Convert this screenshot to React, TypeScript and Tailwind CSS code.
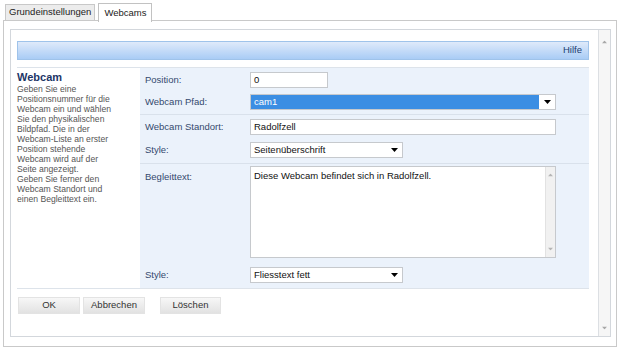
const font = "font-['Liberation_Sans',Arial,sans-serif]";

const helpLines = [
  "Geben Sie eine",
  "Positionsnummer für die",
  "Webcam ein und wählen",
  "Sie den physikalischen",
  "Bildpfad. Die in der",
  "Webcam-Liste an erster",
  "Position stehende",
  "Webcam wird auf der",
  "Seite angezeigt.",
  "Geben Sie ferner den",
  "Webcam Standort und",
  "einen Begleittext ein.",
];

function Arrow({ className = "" }: { className?: string }) {
  return (
    <svg width="7" height="4" viewBox="0 0 7 4" className={className}>
      <path d="M0 0 H7 L3.5 4 Z" fill="currentColor" />
    </svg>
  );
}

function Select({ value, w, active = false }: { value: string; w: string; active?: boolean }) {
  return (
    <div className={`${w} h-[16px] flex border border-[#c6c9cd] bg-white`}>
      <div
        className={`flex-1 flex items-center pl-[3px] text-[9.5px] ${
          active ? "bg-[#3b8ee3] text-white" : "text-[#111]"
        }`}
      >
        {value}
      </div>
      <div className="w-[16px] flex items-center justify-center text-black">
        <Arrow />
      </div>
    </div>
  );
}

function Input({ value, w }: { value: string; w: string }) {
  return (
    <div className={`${w} h-[16px] flex items-center pl-[3px] border border-[#c6c9cd] bg-white text-[9.5px] text-[#111]`}>
      {value}
    </div>
  );
}

function Label({ children }: { children: string }) {
  return <div className="w-[105px] text-[9.5px] text-[#34496e]">{children}</div>;
}

function Button({ children, className }: { children: string; className: string }) {
  return (
    <button
      className={`${className} h-[17px] text-[9.5px] text-[#333] bg-gradient-to-b from-[#f7f7f7] to-[#e2e2e2] border border-[#e3e3e3]`}
    >
      {children}
    </button>
  );
}

export default function App() {
  return (
    <div className={`w-[620px] h-[353px] bg-white overflow-hidden ${font}`}>
      {/* Tabs */}
      <div className="flex items-end h-[21px] pl-[5px] gap-[3px] relative z-10">
        <div className="h-[16px] px-[3px] flex items-center bg-[#ececec] border border-[#c8c8c8] border-b-0 text-[9.5px] text-[#222] mb-px">
          Grundeinstellungen
        </div>
        <div className="h-[19px] px-[5px] flex items-center bg-white border border-[#c2c2c2] border-b-0 text-[9.5px] text-[#222] -mb-px">
          Webcams
        </div>
      </div>

      {/* Tab body */}
      <div className="mx-[3px] -mt-px h-[327px] border border-[#c9c9c9] pl-[6px] pr-[5px] pt-[8px]">
        <div className="h-[308px] flex border border-[#d3d7dc]">
          <div className="flex-1 pl-[6px] pr-[9px] pt-[11px]">
            {/* Header */}
            <div className="h-[19px] flex items-center justify-end pr-[6px] border border-[#9fc3ea] bg-gradient-to-b from-[#dfeafa] to-[#a9ccf5] text-[9.5px] text-[#1d3d70]">
              Hilfe
            </div>

            {/* Main */}
            <div className="mt-[7px] flex border-t border-b border-[#dde3ea]">
              <div className="w-[123px] pt-[2px] pr-[4px]">
                <div className="text-[11px] font-bold text-[#1c3566] leading-[14px]">Webcam</div>
                <div className="text-[8.6px] leading-[10px] text-[#555]">
                  {helpLines.map((l) => (
                    <div key={l}>{l}</div>
                  ))}
                </div>
              </div>

              <div className="flex-1 bg-[#ebf2fb]">
                <div className="pl-[5px] pt-[4px] pb-[4px] flex flex-col gap-[6px] border-b border-[#d9e1eb]">
                  <div className="flex items-center">
                    <Label>Position:</Label>
                    <Input value="0" w="w-[78px]" />
                  </div>
                  <div className="flex items-center">
                    <Label>Webcam Pfad:</Label>
                    <Select value="cam1" w="w-[306px]" active />
                  </div>
                </div>

                <div className="pl-[5px] pt-[4px] pb-[5px] flex flex-col gap-[7px] border-b border-[#d9e1eb]">
                  <div className="flex items-center">
                    <Label>Webcam Standort:</Label>
                    <Input value="Radolfzell" w="w-[306px]" />
                  </div>
                  <div className="flex items-center">
                    <Label>Style:</Label>
                    <Select value="Seitenüberschrift" w="w-[153px]" />
                  </div>
                </div>

                <div className="pl-[5px] pt-[2px] pb-[5px] flex flex-col gap-[9px]">
                  <div className="flex items-start">
                    <div className="pt-[4px]">
                      <Label>Begleittext:</Label>
                    </div>
                    <div className="w-[306px] h-[92px] flex border border-[#c6c9cd] bg-white">
                      <div className="flex-1 pl-[3px] pt-[2px] text-[9.5px] text-[#111]">
                        Diese Webcam befindet sich in Radolfzell.
                      </div>
                      <div className="w-[10px] bg-[#f1f1f1] border-l border-[#e2e2e2] flex flex-col items-center justify-between py-[6px] text-[#b5b5b5]">
                        <Arrow className="rotate-180 scale-75" />
                        <Arrow className="scale-75" />
                      </div>
                    </div>
                  </div>
                  <div className="flex items-center">
                    <Label>Style:</Label>
                    <Select value="Fliesstext fett" w="w-[153px]" />
                  </div>
                </div>
              </div>
            </div>

            {/* Buttons */}
            <div className="mt-[8px] pl-px flex items-start">
              <Button className="w-[62px]">OK</Button>
              <Button className="w-[62px] ml-[3px]">Abbrechen</Button>
              <Button className="w-[61px] ml-[15px]">Löschen</Button>
            </div>
          </div>

          {/* Scrollbar */}
          <div className="w-[12px] border-l border-[#dcdfe3] bg-[#f6f6f6] flex flex-col items-center justify-between pt-[10px] pb-[6px] text-[#a8a8a8]">
            <Arrow className="rotate-180 scale-75" />
            <Arrow className="scale-75" />
          </div>
        </div>
      </div>
    </div>
  );
}
